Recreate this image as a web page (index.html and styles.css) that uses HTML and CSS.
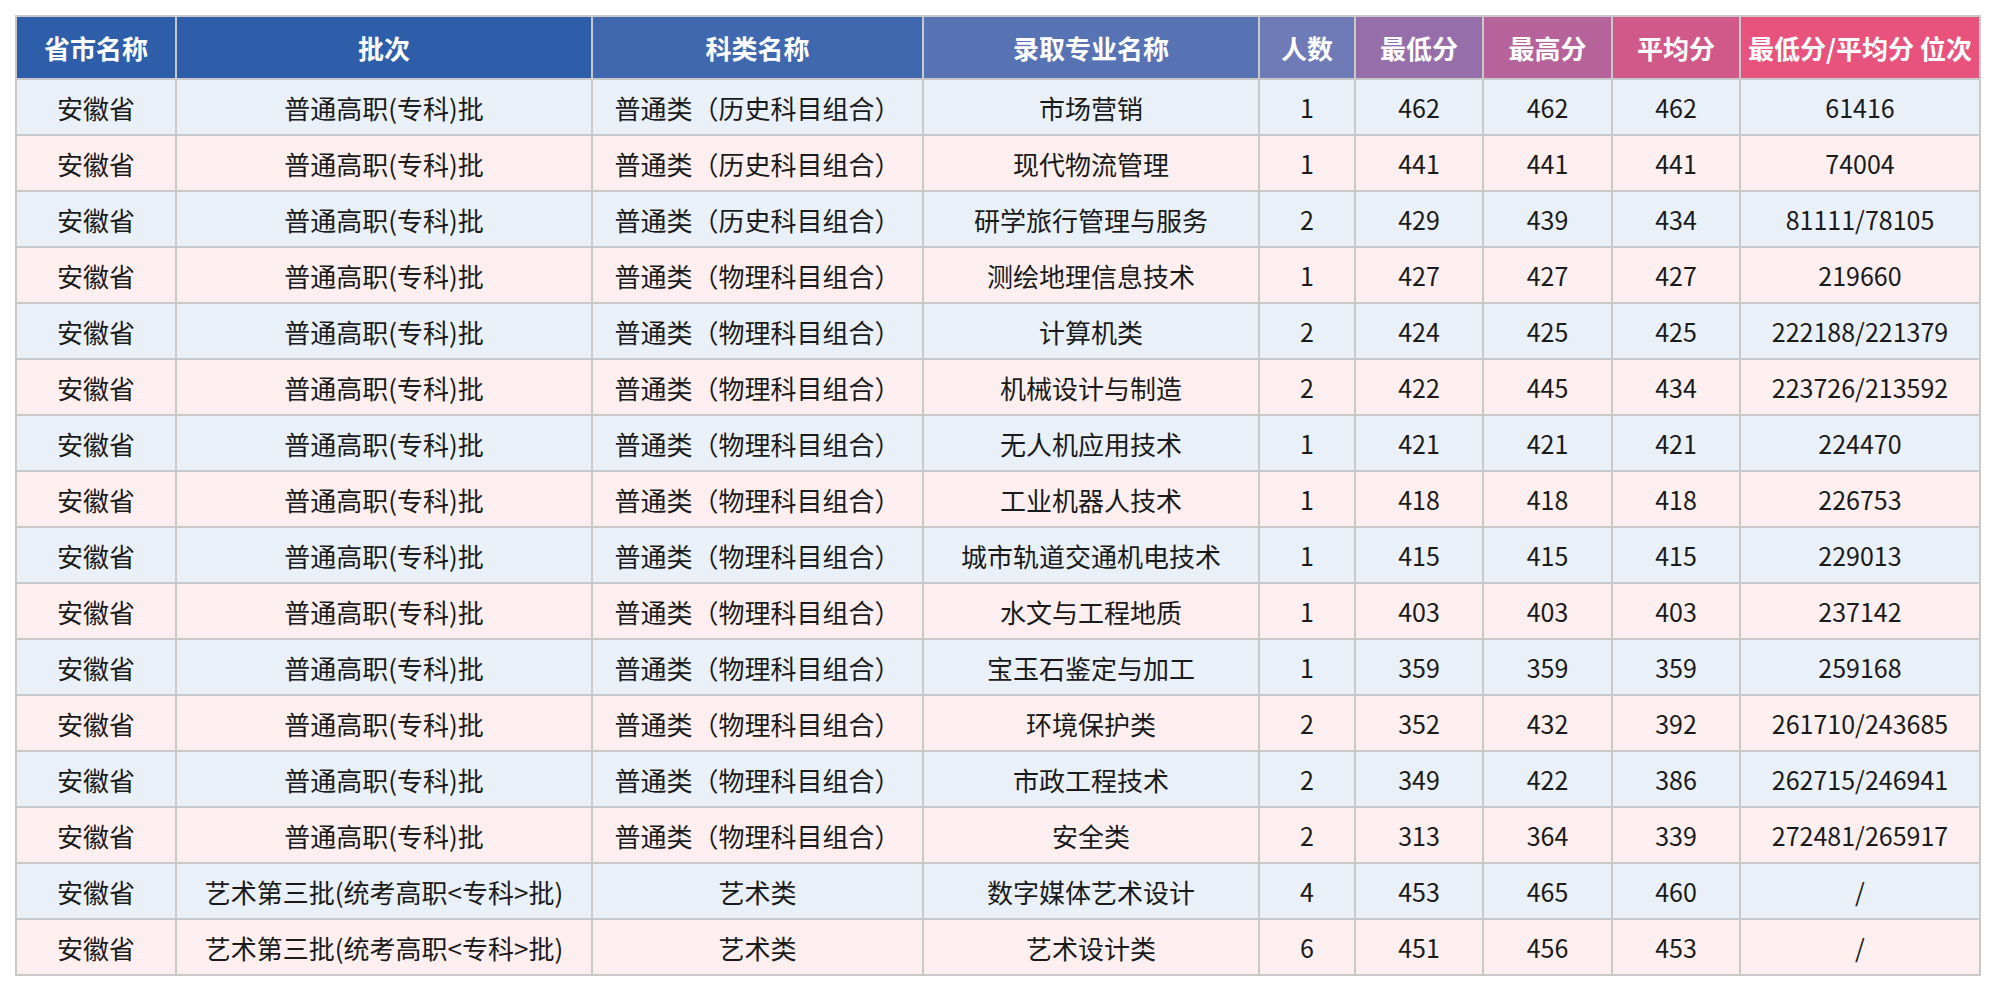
FILE: index.html
```html
<!DOCTYPE html>
<html lang="zh-CN">
<head>
<meta charset="utf-8">
<title>录取分数</title>
<link rel="stylesheet" href="styles.css">
</head>
<body>
<table class="score-table">
  <colgroup>
    <col class="c1"><col class="c2"><col class="c3"><col class="c4"><col class="c5"><col class="c6"><col class="c7"><col class="c8"><col class="c9">
  </colgroup>
  <thead>
    <tr>
      <th class="h1">省市名称</th>
      <th class="h2">批次</th>
      <th class="h3">科类名称</th>
      <th class="h4">录取专业名称</th>
      <th class="h5">人数</th>
      <th class="h6">最低分</th>
      <th class="h7">最高分</th>
      <th class="h8">平均分</th>
      <th class="h9">最低分/平均分 位次</th>
    </tr>
  </thead>
  <tbody>
    <tr><td>安徽省</td><td>普通高职(专科)批</td><td>普通类（历史科目组合）</td><td>市场营销</td><td>1</td><td>462</td><td>462</td><td>462</td><td>61416</td></tr>
    <tr><td>安徽省</td><td>普通高职(专科)批</td><td>普通类（历史科目组合）</td><td>现代物流管理</td><td>1</td><td>441</td><td>441</td><td>441</td><td>74004</td></tr>
    <tr><td>安徽省</td><td>普通高职(专科)批</td><td>普通类（历史科目组合）</td><td>研学旅行管理与服务</td><td>2</td><td>429</td><td>439</td><td>434</td><td>81111/78105</td></tr>
    <tr><td>安徽省</td><td>普通高职(专科)批</td><td>普通类（物理科目组合）</td><td>测绘地理信息技术</td><td>1</td><td>427</td><td>427</td><td>427</td><td>219660</td></tr>
    <tr><td>安徽省</td><td>普通高职(专科)批</td><td>普通类（物理科目组合）</td><td>计算机类</td><td>2</td><td>424</td><td>425</td><td>425</td><td>222188/221379</td></tr>
    <tr><td>安徽省</td><td>普通高职(专科)批</td><td>普通类（物理科目组合）</td><td>机械设计与制造</td><td>2</td><td>422</td><td>445</td><td>434</td><td>223726/213592</td></tr>
    <tr><td>安徽省</td><td>普通高职(专科)批</td><td>普通类（物理科目组合）</td><td>无人机应用技术</td><td>1</td><td>421</td><td>421</td><td>421</td><td>224470</td></tr>
    <tr><td>安徽省</td><td>普通高职(专科)批</td><td>普通类（物理科目组合）</td><td>工业机器人技术</td><td>1</td><td>418</td><td>418</td><td>418</td><td>226753</td></tr>
    <tr><td>安徽省</td><td>普通高职(专科)批</td><td>普通类（物理科目组合）</td><td>城市轨道交通机电技术</td><td>1</td><td>415</td><td>415</td><td>415</td><td>229013</td></tr>
    <tr><td>安徽省</td><td>普通高职(专科)批</td><td>普通类（物理科目组合）</td><td>水文与工程地质</td><td>1</td><td>403</td><td>403</td><td>403</td><td>237142</td></tr>
    <tr><td>安徽省</td><td>普通高职(专科)批</td><td>普通类（物理科目组合）</td><td>宝玉石鉴定与加工</td><td>1</td><td>359</td><td>359</td><td>359</td><td>259168</td></tr>
    <tr><td>安徽省</td><td>普通高职(专科)批</td><td>普通类（物理科目组合）</td><td>环境保护类</td><td>2</td><td>352</td><td>432</td><td>392</td><td>261710/243685</td></tr>
    <tr><td>安徽省</td><td>普通高职(专科)批</td><td>普通类（物理科目组合）</td><td>市政工程技术</td><td>2</td><td>349</td><td>422</td><td>386</td><td>262715/246941</td></tr>
    <tr><td>安徽省</td><td>普通高职(专科)批</td><td>普通类（物理科目组合）</td><td>安全类</td><td>2</td><td>313</td><td>364</td><td>339</td><td>272481/265917</td></tr>
    <tr><td>安徽省</td><td>艺术第三批(统考高职&lt;专科&gt;批)</td><td>艺术类</td><td>数字媒体艺术设计</td><td>4</td><td>453</td><td>465</td><td>460</td><td>/</td></tr>
    <tr><td>安徽省</td><td>艺术第三批(统考高职&lt;专科&gt;批)</td><td>艺术类</td><td>艺术设计类</td><td>6</td><td>451</td><td>456</td><td>453</td><td>/</td></tr>
  </tbody>
</table>
</body>
</html>
```

FILE: styles.css
```css
html, body {
  margin: 0;
  padding: 0;
  background: #ffffff;
}
body {
  padding: 15px 0 0 15px;
  font-family: "Noto Sans CJK SC", "Noto Sans", sans-serif;
}
.score-table {
  border-collapse: collapse;
  table-layout: fixed;
  width: 1964px;
  font-size: 25px;
  color: #1a1a1a;
}
.c1 { width: 160px; }
.c2 { width: 416px; }
.c3 { width: 331px; }
.c4 { width: 336px; }
.c5 { width: 96px; }
.c6 { width: 128px; }
.c7 { width: 129px; }
.c8 { width: 128px; }
.c9 { width: 240px; }

.score-table th,
.score-table td {
  border: 2px solid #c9c9cb;
  text-align: center;
  vertical-align: middle;
  padding: 0;
  white-space: nowrap;
  overflow: hidden;
}
.score-table td:nth-child(-n+4) { font-size: 26px; }
.score-table thead tr { height: 63px; }
.score-table tbody tr { height: 56px; }
.score-table th {
  color: #ffffff;
  font-weight: 700;
  font-size: 26px;
}
.h1 { background: #2e5eaa; }
.h2 { background: #2e5eaa; }
.h3 { background: #4068ae; }
.h4 { background: #5773b4; }
.h5 { background: #6f7bb7; }
.h6 { background: #966ea9; }
.h7 { background: #b5639a; }
.h8 { background: #d1598a; }
.h9 { background: #e8537e; }

.score-table tbody tr:nth-child(odd) td { background: #e9f0f8; }
.score-table tbody tr:nth-child(even) td { background: #fdeff0; }
```
